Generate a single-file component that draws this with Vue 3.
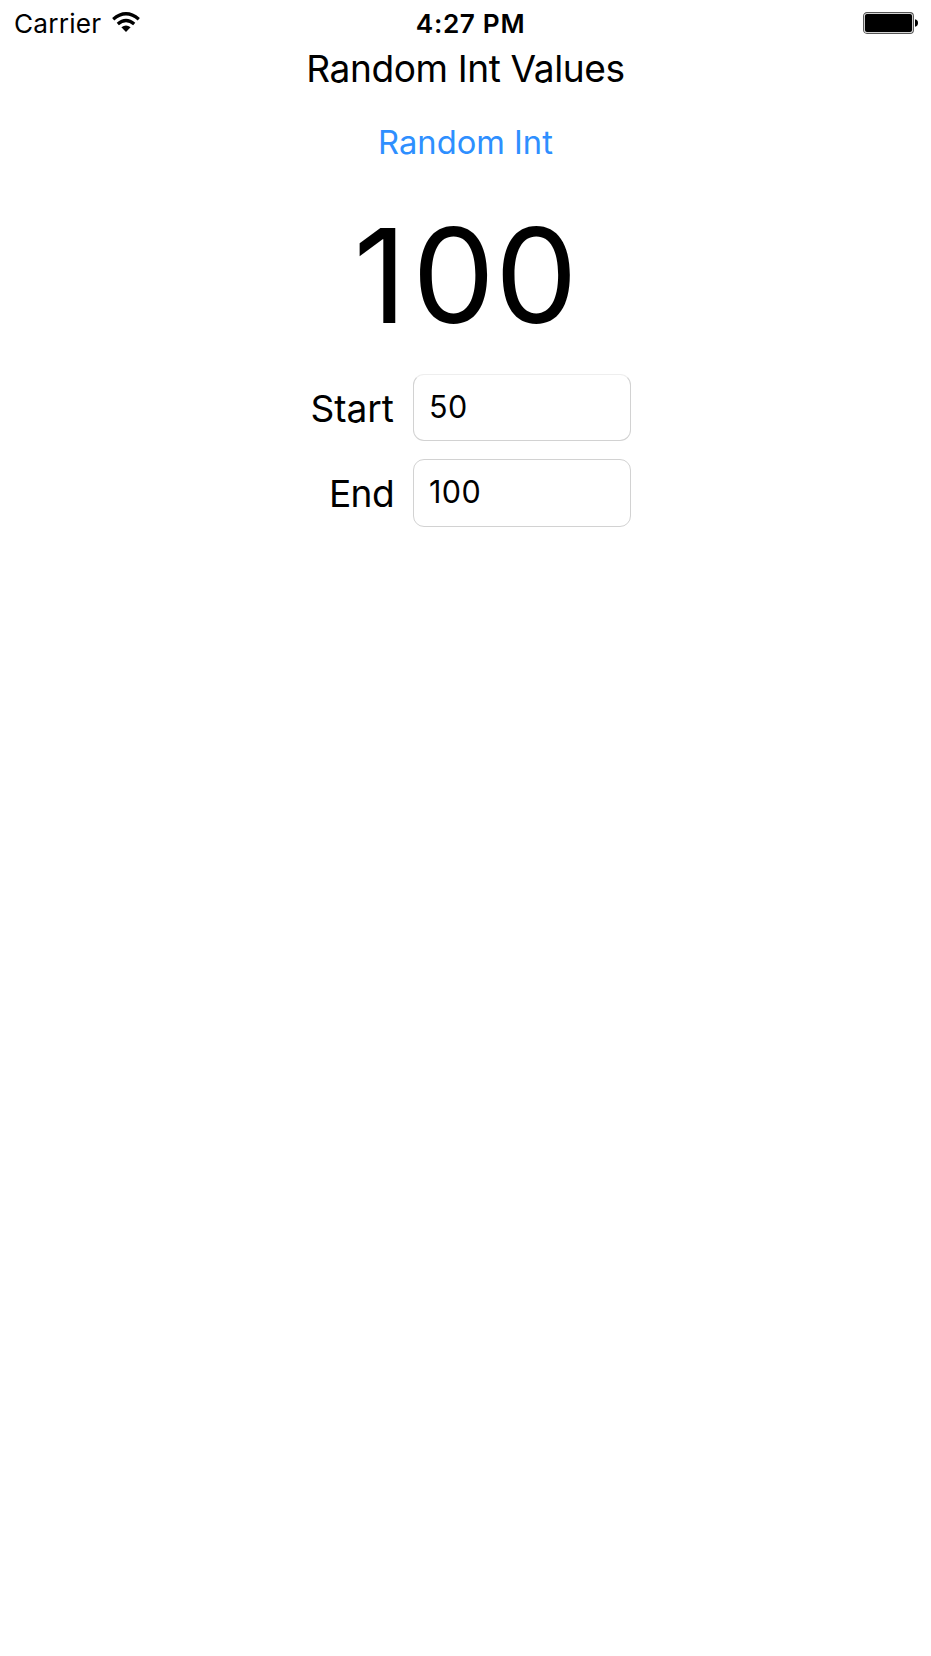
<script setup>
import { ref } from 'vue'

const start = ref('50')
const end = ref('100')
const value = ref(100)

function randomInt() {
  const low = Number(start.value)
  const high = Number(end.value)
  value.value = low + Math.floor(Math.random() * (high - low + 1))
}
</script>

<template>
  <div class="screen">
    <header class="status">
      <div class="network">
        <span class="carrier">Carrier</span>
        <svg class="wifi" width="28" height="21" viewBox="0 0 28 21">
          <g fill="none" stroke="#000" stroke-width="3.3">
            <path d="M1.2 7.2Q14 -3.6 26.8 7.2" />
            <path d="M5.8 11.9Q14 5 22.2 11.9" />
          </g>
          <path d="M9.4 15.2Q14 11.6 18.6 15.2L14 20Z" />
        </svg>
      </div>
      <span class="time">4:27 PM</span>
      <svg class="battery" width="56" height="23" viewBox="0 0 56 23">
        <rect x=".6" y=".6" width="49.8" height="20.8" rx="3.4" fill="#fff" stroke="#555" stroke-width="1.1" />
        <rect x="1.9" y="1.9" width="47.2" height="18.2" rx="2" />
        <path d="M52 7.3Q55 8 55 11T52 14.7Z" />
      </svg>
    </header>
    <main>
      <h1 class="title">Random Int Values</h1>
      <button class="action" @click="randomInt">Random Int</button>
      <output class="value">{{ value }}</output>
      <div class="form">
        <label for="start" class="start-label">Start</label>
        <input id="start" v-model="start" />
        <label for="end" class="end-label">End</label>
        <input id="end" v-model="end" />
      </div>
    </main>
  </div>
</template>

<style>
body {
  margin: 0;
  background: #fff;
}
</style>

<style scoped>
.screen {
  width: 931px;
  height: 1656px;
  overflow: hidden;
  background: #fff;
  color: #000;
  font-family: Inter, "Liberation Sans", sans-serif;
}
.status {
  display: grid;
  grid-template-columns: 1fr auto 1fr;
  height: 47px;
  box-sizing: border-box;
  padding: 0 12px 0 14px;
  font-size: 26.2px;
  line-height: 47px;
}
.network {
  display: flex;
}
.carrier {
  width: 98px;
  letter-spacing: .2px;
}
.wifi {
  margin-top: 11.5px;
}
.time {
  padding-left: 8px;
  font-weight: 600;
  letter-spacing: .65px;
}
.battery {
  justify-self: end;
  margin-top: 12px;
}
main {
  display: flex;
  flex-direction: column;
  align-items: center;
}
.title {
  margin: 0;
  font-size: 37.1px;
  font-weight: 400;
  letter-spacing: -.4px;
  line-height: 44px;
}
.action {
  margin-top: 31px;
  padding: 0;
  border: 0;
  background: none;
  color: #2e8fff;
  font: 32.7px/40px Inter, "Liberation Sans", sans-serif;
}
.value {
  display: block;
  margin-top: 34px;
  font-size: 131px;
  line-height: 160px;
}
.value::first-letter {
  letter-spacing: 5.5px;
}
.form {
  display: grid;
  grid-template-columns: 394px 218px;
  grid-auto-rows: 67px;
  gap: 18px 19px;
  width: 931px;
  margin-top: 18px;
}
label {
  text-align: right;
  font-size: 37.1px;
  line-height: 69px;
}
.end-label {
  letter-spacing: -.6px;
}
input {
  width: 218px;
  height: 67px;
  box-sizing: border-box;
  padding: 0 15px 3px;
  border: 1px solid #d2d2d2;
  border-radius: 11px;
  outline: none;
  background: #fff;
  color: #000;
  font: 30.5px Inter, "Liberation Sans", sans-serif;
  letter-spacing: .4px;
}
#start {
  border-top-color: #eee;
}
#end {
  height: 68px;
  padding-bottom: 4px;
}
</style>
